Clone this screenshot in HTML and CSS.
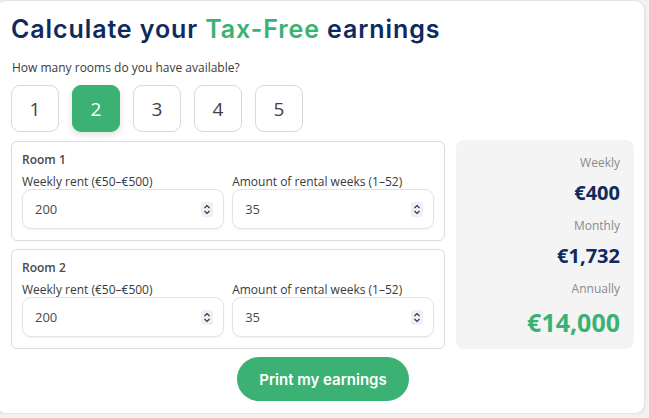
FILE: index.html
```html
<!DOCTYPE html>
<html lang="en">
<head>
  <meta charset="UTF-8" />
  <meta name="viewport" content="width=device-width, initial-scale=1.0"/>
  <title>Tax-Free Earnings Calculator</title>
  <link rel="stylesheet" href="styles.css">
</head>
<body>

  <div class="card">
    <h1>Calculate your <span class="green">Tax-Free</span> earnings</h1>
    <p class="question">How many rooms do you have available?</p>

    <!-- Room count picker -->
    <div class="rooms-picker">
      <button class="count">1</button>
      <button class="count active">2</button>
      <button class="count">3</button>
      <button class="count">4</button>
      <button class="count">5</button>
    </div>

    <div class="calc">
      <div class="room-list">

        <div class="room">
          <div class="room-title">Room 1</div>
          <div class="fields">
            <label class="field">
              <span class="label">Weekly rent (€50–€500)</span>
              <span class="input">
                <input type="text" value="200">
                <svg class="spin" width="12" height="15" viewBox="0 0 12 15"><rect width="12" height="15" rx="2.5" fill="#f0f0f2"/><path d="M3.5 6 L6 3.5 L8.5 6" fill="none" stroke="#1f3566" stroke-width="1.2"/><path d="M3.5 9 L6 11.5 L8.5 9" fill="none" stroke="#1f3566" stroke-width="1.2"/></svg>
              </span>
            </label>
            <label class="field">
              <span class="label">Amount of rental weeks (1–52)</span>
              <span class="input">
                <input type="text" value="35">
                <svg class="spin" width="12" height="15" viewBox="0 0 12 15"><rect width="12" height="15" rx="2.5" fill="#f0f0f2"/><path d="M3.5 6 L6 3.5 L8.5 6" fill="none" stroke="#1f3566" stroke-width="1.2"/><path d="M3.5 9 L6 11.5 L8.5 9" fill="none" stroke="#1f3566" stroke-width="1.2"/></svg>
              </span>
            </label>
          </div>
        </div>

        <div class="room">
          <div class="room-title">Room 2</div>
          <div class="fields">
            <label class="field">
              <span class="label">Weekly rent (€50–€500)</span>
              <span class="input">
                <input type="text" value="200">
                <svg class="spin" width="12" height="15" viewBox="0 0 12 15"><rect width="12" height="15" rx="2.5" fill="#f0f0f2"/><path d="M3.5 6 L6 3.5 L8.5 6" fill="none" stroke="#1f3566" stroke-width="1.2"/><path d="M3.5 9 L6 11.5 L8.5 9" fill="none" stroke="#1f3566" stroke-width="1.2"/></svg>
              </span>
            </label>
            <label class="field">
              <span class="label">Amount of rental weeks (1–52)</span>
              <span class="input">
                <input type="text" value="35">
                <svg class="spin" width="12" height="15" viewBox="0 0 12 15"><rect width="12" height="15" rx="2.5" fill="#f0f0f2"/><path d="M3.5 6 L6 3.5 L8.5 6" fill="none" stroke="#1f3566" stroke-width="1.2"/><path d="M3.5 9 L6 11.5 L8.5 9" fill="none" stroke="#1f3566" stroke-width="1.2"/></svg>
              </span>
            </label>
          </div>
        </div>

      </div>

      <!-- Totals -->
      <div class="summary">
        <div class="sum-label">Weekly</div>
        <div class="sum-value">€400</div>
        <div class="sum-label">Monthly</div>
        <div class="sum-value">€1,732</div>
        <div class="sum-label">Annually</div>
        <div class="sum-value big">€14,000</div>
      </div>
    </div>

    <div class="actions">
      <button class="print">Print my earnings</button>
    </div>
  </div>

</body>
</html>
```

FILE: styles.css
```css
body {
  margin: 0;
  background-color: #f2f2f2;
  font-family: "Open Sans", Arial, sans-serif;
  color: #444;
}

.card {
  width: 623px;
  margin-left: -4px;
  padding: 13px 10px 12px 14px;
  background-color: #fff;
  border: 1px solid #e4e4e4;
  border-radius: 10px;
  box-shadow: 0 1px 3px rgba(0, 0, 0, 0.08);
}

h1 {
  margin: 0;
  font-family: Inter, "Open Sans", sans-serif;
  font-size: 25px;
  font-weight: 600;
  line-height: 31px;
  color: #0f2a5c;
  letter-spacing: 0.9px;
}

.green {
  color: #3bb273;
}

.question {
  margin: 15px 0 0 1px;
  font-size: 12px;
  line-height: 16px;
  color: #3a3a3a;
}

/* Room count buttons */
.rooms-picker {
  display: flex;
  gap: 13px;
  margin-top: 9px;
}

.count {
  width: 48px;
  height: 47px;
  border: 1px solid #d9d9d9;
  border-radius: 9px;
  background-color: #fff;
  font-family: "Open Sans", sans-serif;
  font-size: 19px;
  color: #3f3f3f;
  padding: 0;
}

.count.active {
  background-color: #3bb273;
  border-color: #3bb273;
  color: #fff;
  box-shadow: 0 3px 7px rgba(0, 0, 0, 0.12);
}

/* Rooms + summary */
.calc {
  display: flex;
  gap: 11px;
  margin-top: 9px;
}

.room-list {
  width: 435px;
  display: flex;
  flex-direction: column;
  gap: 8px;
}

.room {
  border: 1px solid #dcdcdc;
  border-radius: 6px;
  padding: 10px 10px 11px 10px;
}

.room-title {
  font-size: 12px;
  font-weight: 600;
  line-height: 16px;
  color: #4a4a4a;
}

.fields {
  display: flex;
  gap: 8px;
  margin-top: 6px;
}

.field {
  flex: 1;
  display: flex;
  flex-direction: column;
}

.label {
  font-size: 12px;
  line-height: 16px;
  color: #3a3a3a;
}

.input {
  display: flex;
  align-items: center;
  height: 38px;
  margin-top: -1px;
  padding: 0 10px 0 12px;
  border: 1px solid #e3e3e3;
  border-radius: 9px;
  box-shadow: 0 1px 2px rgba(0, 0, 0, 0.06);
}

.input input {
  flex: 1;
  min-width: 0;
  border: none;
  outline: none;
  padding: 0;
  font-family: "Open Sans", sans-serif;
  font-size: 13px;
  color: #4a4a4a;
  background: transparent;
}

.spin {
  flex-shrink: 0;
}

.summary {
  width: 151px;
  margin-top: -1px;
  padding: 15px 14px 12px 13px;
  background-color: #f4f4f5;
  border-radius: 8px;
  text-align: right;
}

.sum-label {
  font-size: 12px;
  line-height: 16px;
  color: #8a8a8a;
}

.sum-value {
  margin: 10px 0 13px;
  font-size: 20px;
  font-weight: 700;
  line-height: 24px;
  color: #0f2a5c;
}

.sum-value.big {
  margin: 10px 0 0;
  font-size: 25px;
  line-height: 30px;
  color: #3bb273;
}

/* Print button */
.actions {
  display: flex;
  justify-content: center;
  margin-top: 8px;
  padding-left: 1px;
}

.print {
  width: 172px;
  height: 44px;
  border: none;
  border-radius: 22px;
  background-color: #3bb273;
  color: #fff;
  font-family: Inter, "Open Sans", sans-serif;
  font-size: 15px;
  font-weight: 600;
  cursor: pointer;
}
```
